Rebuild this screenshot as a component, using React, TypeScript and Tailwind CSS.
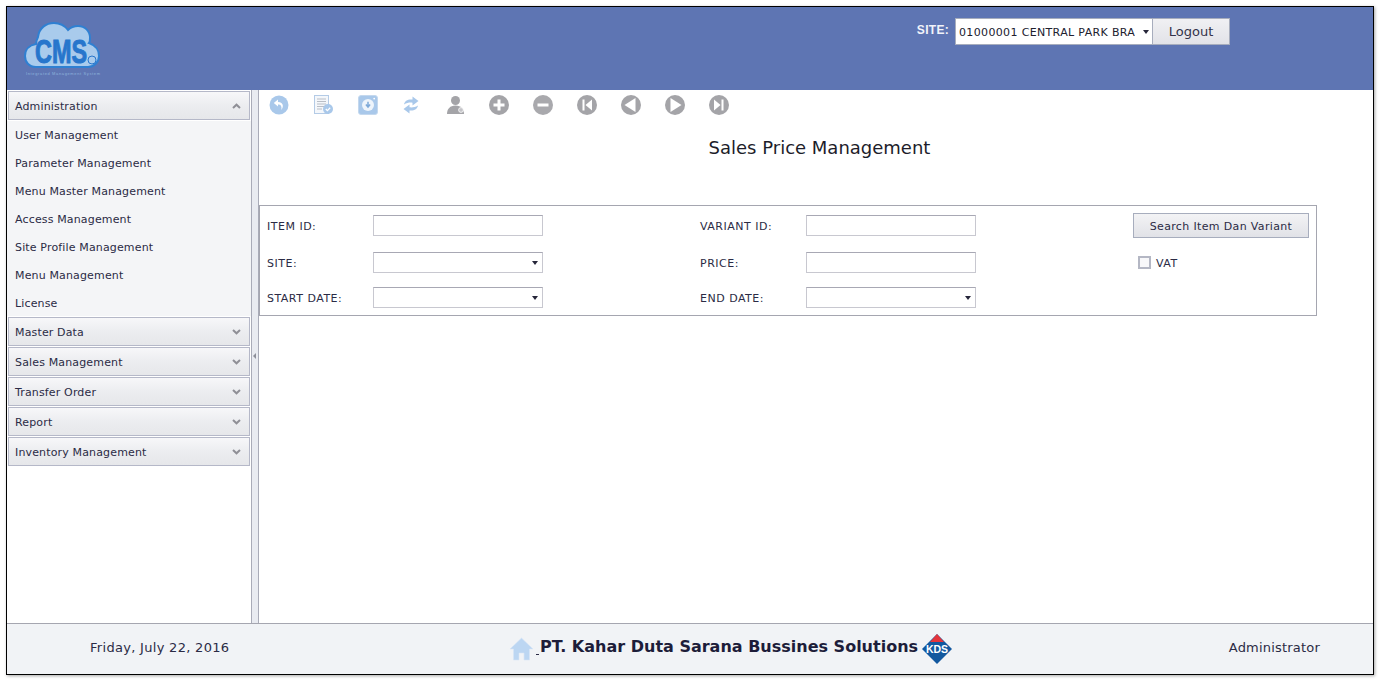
import React from 'react';

const adminItems = [
  'User Management',
  'Parameter Management',
  'Menu Master Management',
  'Access Management',
  'Site Profile Management',
  'Menu Management',
  'License',
];

const AccordionHead = ({ label, open }: { label: string; open?: boolean }) => (
  <div className="mx-px flex h-[29px] shrink-0 items-center justify-between border border-[#b5b8c8] bg-gradient-to-b from-[#f7f7f9] via-[#ecedf0] to-[#e6e7ea] pl-[6px] pr-[8px] tracking-[0.15px] text-[#2b2b45]">
    <span className="pt-[4px]">{label}</span>
    <svg width="9" height="6" viewBox="0 0 9 6">
      <path d={open ? 'M1 5 4.5 1.7 8 5' : 'M1 1 4.5 4.3 8 1'} fill="none" stroke="#8f8f96" strokeWidth="2" />
    </svg>
  </div>
);

const Field = ({ caret }: { caret?: boolean }) => (
  <div className="relative h-[21px] w-[170px] border border-[#c8c8d0] border-t-[#a8a8b4] bg-white">
    {caret && (
      <span className="absolute right-[4px] top-[8px] h-0 w-0 border-x-[3.5px] border-t-[4px] border-x-transparent border-t-[#26263a]" />
    )}
  </div>
);

const Label = ({ text, gap }: { text: string; gap?: boolean }) => (
  <span className={`w-[106px] pt-[3px] tracking-[0.5px] ${gap ? 'ml-[157px]' : ''}`}>{text}</span>
);

const Toolbar = () => (
  <div className="flex h-[30px] items-center pl-[10px]">
    {/* back */}
    <svg width="20" height="20" viewBox="0 0 20 20" className="mr-[24px]">
      <circle cx="10" cy="10" r="9.5" fill="#a9c8ea" />
      <path d="M9 4.5 4.8 8 9 11.5V9.4c2.6 0 4 1.2 3.4 5.6 2.2-3 2.6-7.6-3.4-8z" fill="#fff" />
    </svg>
    {/* document */}
    <svg width="22" height="20" viewBox="0 0 22 20" className="mr-[23px]">
      <rect x="1.5" y="0.5" width="14" height="18" fill="#f4f7fb" stroke="#b4cbe6" />
      <path d="M4 4h9M4 6.5h9M4 9h9M4 11.5h7M4 14h5" stroke="#b9bec6" strokeWidth="1" />
      <circle cx="15" cy="14" r="5" fill="#a9c8ea" />
      <path d="m12.8 14 1.6 1.6 2.8-2.8" fill="none" stroke="#fff" strokeWidth="1.3" />
    </svg>
    {/* download */}
    <svg width="20" height="20" viewBox="0 0 20 20" className="mr-[23px]">
      <rect x="0.5" y="0.5" width="19" height="19" rx="2.5" fill="#a9c8ea" stroke="#c4d8ee" />
      <circle cx="10" cy="10" r="6" fill="#eef4fb" />
      <path d="M10 6.8v4.6M7.9 9.6 10 12l2.1-2.4" fill="none" stroke="#7ea9d8" strokeWidth="1.5" />
      <circle cx="16.2" cy="3.6" r="0.9" fill="#fff" />
    </svg>
    {/* refresh */}
    <svg width="20" height="20" viewBox="0 0 20 20" className="mr-[25px]">
      <path d="M3 9.5C3.5 6 7 4 11.5 4.6V1.5l6 4.5-6 4.5V7.7C9 7.4 6 7.6 3 9.5z" fill="#a9c8ea" />
      <path d="M17 10.5c-.5 3.5-4 5.500-8.500 4.900V18.500l-6-4.500 6-4.500v2.800c2.500.3 5.500.1 8.500-1.800z" fill="#a9c8ea" />
    </svg>
    {/* user */}
    <svg width="20" height="20" viewBox="0 0 20 20" className="mr-[23px]">
      <circle cx="9.5" cy="5.5" r="4.500" fill="#a4a4a8" />
      <path d="M1 19c0-5 3-8.500 8.500-8.500s8.500 3.500 8.500 8.500z" fill="#a4a4a8" />
      <circle cx="15" cy="15" r="2.400" fill="#c4c4c8" stroke="#fff" strokeWidth="0.8" />
    </svg>
    {/* add */}
    <svg width="20" height="20" viewBox="0 0 20 20" className="mr-[24px]">
      <circle cx="10" cy="10" r="10" fill="#a4a4a8" />
      <path d="M10 4.500v11M4.500 10h11" stroke="#fff" strokeWidth="3" />
    </svg>
    {/* remove */}
    <svg width="20" height="20" viewBox="0 0 20 20" className="mr-[24px]">
      <circle cx="10" cy="10" r="10" fill="#a9a9ad" />
      <path d="M4.500 10h11" stroke="#fff" strokeWidth="3" />
    </svg>
    {/* first */}
    <svg width="20" height="20" viewBox="0 0 20 20" className="mr-[24px]">
      <circle cx="10" cy="10" r="10" fill="#a4a4a8" />
      <path d="M5.500 4.500h2v11h-2zM15 4.500v11L8.500 10z" fill="#fff" />
    </svg>
    {/* prev */}
    <svg width="20" height="20" viewBox="0 0 20 20" className="mr-[24px]">
      <circle cx="10" cy="10" r="10" fill="#a4a4a8" />
      <path d="M14.500 3v14L3.500 10z" fill="#fff" />
    </svg>
    {/* next */}
    <svg width="20" height="20" viewBox="0 0 20 20" className="mr-[24px]">
      <circle cx="10" cy="10" r="10" fill="#a4a4a8" />
      <path d="M5.500 3v14l11-7z" fill="#fff" />
    </svg>
    {/* last */}
    <svg width="20" height="20" viewBox="0 0 20 20">
      <circle cx="10" cy="10" r="10" fill="#a4a4a8" />
      <path d="M12.500 4.500h2v11h-2zM5 4.500v11l6.500-5.500z" fill="#fff" />
    </svg>
  </div>
);

export default function App() {
  return (
    <div className="h-[681px] w-[1380px] overflow-hidden bg-white p-[6px] font-['DejaVu_Sans',sans-serif] text-[11px] text-[#2b2b45]">
      <div className="flex h-full flex-col border border-black shadow-[1px_1px_3px_rgba(0,0,0,0.35)]">
        {/* header */}
        <header className="flex h-[83px] shrink-0 bg-[#5e75b3]">
          <div className="ml-[17px] mt-[15px] w-[78px]">
            <svg width="78" height="56" viewBox="0 0 78 56">
              <path d="M12 45C5 45 1 40 1 34 1 27 6 23 12 22 12 19 13 17 14 15 15 6 22 1 30 1 36 1 41 4 44 8 47 5 50 4 54 4 61 4 66 9 66 16 66 18 66 20 65 21 71 23 75 28 75 34 75 40 70 45 64 45Z" fill="#a9cbec" stroke="#2f80d2" strokeWidth="2" />
              <text x="37" y="41" textAnchor="middle" fontFamily="'Liberation Sans', sans-serif" fontWeight="700" fontSize="33" fill="#2776cc" stroke="#2776cc" strokeWidth="1" textLength="52" lengthAdjust="spacingAndGlyphs">CMS</text>
              <circle cx="68" cy="38" r="4" fill="none" stroke="#2776cc" strokeWidth="1" />
              <text x="39" y="53" textAnchor="middle" fontFamily="'Liberation Sans', sans-serif" fontSize="4" fill="#8fb4dc" textLength="74">Integrated Management System</text>
            </svg>
          </div>
          <div className="ml-auto mr-[143px] mt-[11px] flex h-[27px] items-start">
            <span className="mr-[6px] mt-[3px] font-['Liberation_Sans',sans-serif] text-[12px] font-bold tracking-[0.3px] text-[#f1f3fa]">SITE:</span>
            <div className="relative flex h-[27px] w-[198px] items-center overflow-hidden border border-[#a7adbd] bg-white pl-[3px] text-[#20202e]">
              <span className="w-[176px] overflow-hidden whitespace-nowrap pt-[3px] tracking-[0.35px]">01000001 CENTRAL PARK BRANCH</span>
              <span className="absolute right-[3px] top-[11px] h-0 w-0 border-x-[3.5px] border-t-[4px] border-x-transparent border-t-[#26263a]" />
            </div>
            <button className="-ml-px h-[27px] w-[78px] border border-[#a7adbd] bg-gradient-to-b from-[#f0f0f3] to-[#e2e3e8] text-[13px] text-[#33334a]">Logout</button>
          </div>
        </header>

        {/* body */}
        <div className="flex min-h-0 flex-1">
          <aside className="flex w-[244px] shrink-0 flex-col gap-px bg-white pt-px">
            <AccordionHead label="Administration" open />
            <div className="flex h-[195px] shrink-0 flex-col bg-[#f4f5f7] pl-[8px] tracking-[0.15px]">
              {adminItems.map((m) => (
                <div key={m} className="flex h-[28px] shrink-0 items-center pt-[2px]">{m}</div>
              ))}
            </div>
            <AccordionHead label="Master Data" />
            <AccordionHead label="Sales Management" />
            <AccordionHead label="Transfer Order" />
            <AccordionHead label="Report" />
            <AccordionHead label="Inventory Management" />
          </aside>

          {/* splitter */}
          <div className="flex w-[8px] shrink-0 items-center border-x border-[#a9abb8] bg-[#e9ebf1] pb-[2px] pl-[1px]">
            <span className="h-0 w-0 border-y-[3px] border-r-[3px] border-y-transparent border-r-[#8d8f9a]" />
          </div>

          <main className="min-w-0 flex-1 bg-white">
            <Toolbar />
            <h1 className="mt-[17px] h-[20px] pl-[7px] text-center text-[18px] leading-[22px] text-[#1d1d2a]">Sales Price Management</h1>
            <div className="mt-[48px] h-[111px] w-[1058px] border border-[#a5a6b0] pl-[7px]">
              <div className="flex h-[39px] items-center">
                <Label text="ITEM ID:" />
                <Field />
                <Label text="VARIANT ID:" gap />
                <Field />
                <button className="ml-[157px] h-[25px] w-[176px] border border-[#a7adbd] bg-gradient-to-b from-[#f3f3f5] to-[#e1e2e7] pt-[3px] tracking-[0.35px] text-[#2b2b45]">Search Item Dan Variant</button>
              </div>
              <div className="flex h-[35px] items-center">
                <Label text="SITE:" />
                <Field caret />
                <Label text="PRICE:" gap />
                <Field />
                <label className="ml-[162px] flex items-center gap-[5px]">
                  <span className="h-[13px] w-[13px] border-2 border-[#b4b7c4] bg-[#f8f8fa]" />
                  <span className="pt-[3px] tracking-[0.5px]">VAT</span>
                </label>
              </div>
              <div className="flex h-[35px] items-center">
                <Label text="START DATE:" />
                <Field caret />
                <Label text="END DATE:" gap />
                <Field caret />
              </div>
            </div>
          </main>
        </div>

        {/* footer */}
        <footer className="flex h-[51px] shrink-0 items-center border-t border-[#a5a6b0] bg-[#f1f3f6] text-[13px]">
          <div className="ml-[83px] w-[418px] pb-[2px] tracking-[0.3px]">Friday, July 22, 2016</div>
          <div className="flex items-center pb-[4px]">
            <svg width="26" height="24" viewBox="0 0 26 24" className="mt-[4px]">
              <path d="M13.500 1 2 12h3.500v11H11v-7h5v7h5.500V12H25z" fill="#bcd6f2" stroke="#d8e6f6" strokeWidth="0.6" />
            </svg>
            <span className="ml-[2px] mt-[15px] h-px w-[3px] bg-[#2b2b45]" />
            <span className="ml-px text-[16px] font-bold text-[#1d1d3a]">PT. Kahar Duta Sarana Bussines Solutions</span>
            <svg width="30" height="30" viewBox="0 0 30 30" className="ml-[4px] mt-[4px]">
              <path d="M15 0 30 15 15 30 0 15z" fill="#12589f" />
              <path d="M15 0 22 8H8z" fill="#e4353c" />
              <text x="15" y="19" textAnchor="middle" fontFamily="'Liberation Sans', sans-serif" fontWeight="700" fontSize="10.5" fill="#fff">KDS</text>
            </svg>
          </div>
          <div className="ml-auto mr-[53px] pb-[2px] tracking-[0.2px]">Administrator</div>
        </footer>
      </div>
    </div>
  );
}
